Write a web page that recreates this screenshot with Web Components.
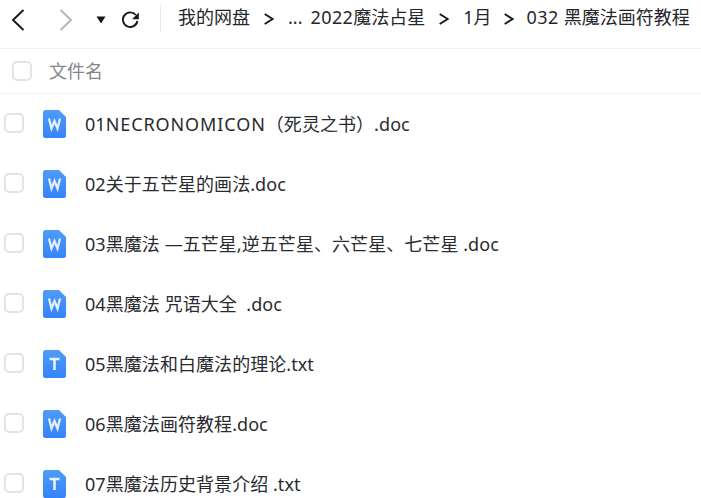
<!DOCTYPE html>
<html>
<head>
<meta charset="utf-8">
<style>
  html, body { margin: 0; height: 498px; overflow: hidden; background: #fff; }
  body { font-family: "Noto Sans", "Noto Sans CJK SC", sans-serif; }
  .caps { letter-spacing: .9px; }
  .num { letter-spacing: .4px; }
</style>
</head>
<body>
<nav-bar>
  <bread-item>我的网盘</bread-item>
  <bread-item dots>...</bread-item>
  <bread-item><span class="num">2022</span>魔法占星</bread-item>
  <bread-item style="--l:12px;--r:13px">1月</bread-item>
  <bread-item last><span class="num">032 </span>黑魔法画符教程</bread-item>
</nav-bar>
<list-head>文件名</list-head>
<file-row type="w">01<span class="caps">NECRONOMICON</span>（死灵之书）.doc</file-row>
<file-row type="w">02关于五芒星的画法.doc</file-row>
<file-row type="w">03黑魔法 —五芒星,逆五芒星、六芒星、七芒星 .doc</file-row>
<file-row type="w">04黑魔法 咒语大全&nbsp; .doc</file-row>
<file-row type="t">05黑魔法和白魔法的理论.txt</file-row>
<file-row type="w">06黑魔法画符教程.doc</file-row>
<file-row type="t">07黑魔法历史背景介绍 .txt</file-row>
<script>
// 顶部导航条
class NavBar extends HTMLElement {
  constructor() {
    super();
    this.attachShadow({ mode: 'open' });
    this.shadowRoot.innerHTML = `
      <style>
        :host { display: flex; align-items: flex-start; height: 49px; box-sizing: border-box;
                border-bottom: 1px solid #f0f0f2; white-space: nowrap; overflow: hidden; }
        svg { display: block; flex: none; }
        .tools { display: flex; align-items: center; padding: 6px 0 0 11px; height: 28px; }
        .sep { width: 1px; height: 27px; background: #e8e8ea; margin: 5px 17px 0 20px; flex: none; }
        .crumbs { display: flex; align-items: center; padding-top: 5px; }
      </style>
      <div class="tools">
        <svg width="14" height="22" viewBox="0 0 14 22" fill="none" stroke="#15171f" stroke-width="1.9"><path d="M12.500 1 2 11l10.500 10"/></svg>
        <svg style="margin-left:34px" width="14" height="22" viewBox="0 0 14 22" fill="none" stroke="#b4b4b6" stroke-width="1.9"><path d="M1.500 1 12 11 1.500 21"/></svg>
        <svg style="margin-left:23px" width="10" height="8" viewBox="0 0 10 8"><path d="M.5 .5h9L5 7.500z" fill="#15171f"/></svg>
        <svg style="margin-left:14px" width="20" height="20" viewBox="0 0 20 20" fill="none"><path d="M15.800 5A7.300 7.300 0 1 0 17.400 11" stroke="#15171f" stroke-width="1.900"/><path d="M18.800 2.500v6.700h-6.700z" fill="#15171f"/></svg>
      </div>
      <div class="sep"></div>
      <div class="crumbs"><slot></slot></div>`;
  }
}

class BreadItem extends HTMLElement {
  constructor() {
    super();
    this.attachShadow({ mode: 'open' });
    const last = this.hasAttribute('last');
    const dots = this.hasAttribute('dots');
    let tail = '<svg width="10" height="12" viewBox="0 0 10 12" fill="none" stroke="#15171f" stroke-width="2"><path d="M.7 1 8.700 6 .7 11"/></svg>';
    if (last) tail = '';
    if (dots) tail = '<span style="width:8px"></span>';
    this.shadowRoot.innerHTML = `
      <style>
        :host { display: flex; align-items: center; font-size: 18px; line-height: 24px; color: #25262b; white-space: pre; }
        svg { display: block; margin: 3px var(--r, 14px) 0 var(--l, 14px); }
      </style>
      <div><slot></slot></div>${tail}`;
  }
}

// 列表表头
class ListHead extends HTMLElement {
  constructor() {
    super();
    this.attachShadow({ mode: 'open' });
    this.shadowRoot.innerHTML = `
      <style>
        :host { display: flex; align-items: center; height: 45px; box-sizing: border-box;
                border-bottom: 1px solid #f0f0f2; padding-left: 12px;
                font-size: 18px; color: #85858b; }
        i { width: 20px; height: 20px; box-sizing: border-box; border: 2px solid #e3e3e5;
            border-radius: 5px; margin-right: 17px; flex: none; }
        span { padding-bottom: 2px; }
      </style>
      <i></i><span><slot></slot></span>`;
  }
}

// 文件行
class FileRow extends HTMLElement {
  constructor() {
    super();
    this.attachShadow({ mode: 'open' });
    const letter = this.getAttribute('type') === 't'
      ? '<path d="M6.500 9h10M11.500 9v11" stroke="#e9f2ff" stroke-width="2.600" fill="none"/>'
      : '<path d="M6 8.500 8.500 18.500 11.500 11 14.500 18.500 17 8.500" stroke="#e4eeff" stroke-width="2.300" fill="none"/>';
    this.shadowRoot.innerHTML = `
      <style>
        :host { display: flex; align-items: center; height: 60px; padding-left: 4px;
                font-size: 18px; color: #2a2b30; white-space: nowrap; letter-spacing: .06px; }
        i { width: 20px; height: 20px; box-sizing: border-box; border: 2px solid #e3e3e5;
            border-radius: 5px; flex: none; margin: 0 19px 2px 0; }
        svg { display: block; flex: none; margin-right: 19px; }
        span { padding-bottom: 2px; }
      </style>
      <i></i>
      <svg width="23" height="28" viewBox="0 0 23 28">
        <defs><linearGradient id="g" x1="0" y1="0" x2="0" y2="1"><stop offset="0" stop-color="#4d9cf8"/><stop offset="1" stop-color="#3583fb"/></linearGradient></defs>
        <path d="M2.500 0H16L23 7V25.500a2.500 2.500 0 0 1-2.500 2.500H2.500A2.500 2.500 0 0 1 0 25.500V2.500A2.500 2.500 0 0 1 2.500 0z" fill="url(#g)"/>
        ${letter}
      </svg>
      <span><slot></slot></span>`;
  }
}

customElements.define('nav-bar', NavBar);
customElements.define('bread-item', BreadItem);
customElements.define('list-head', ListHead);
customElements.define('file-row', FileRow);
</script>
</body>
</html>
